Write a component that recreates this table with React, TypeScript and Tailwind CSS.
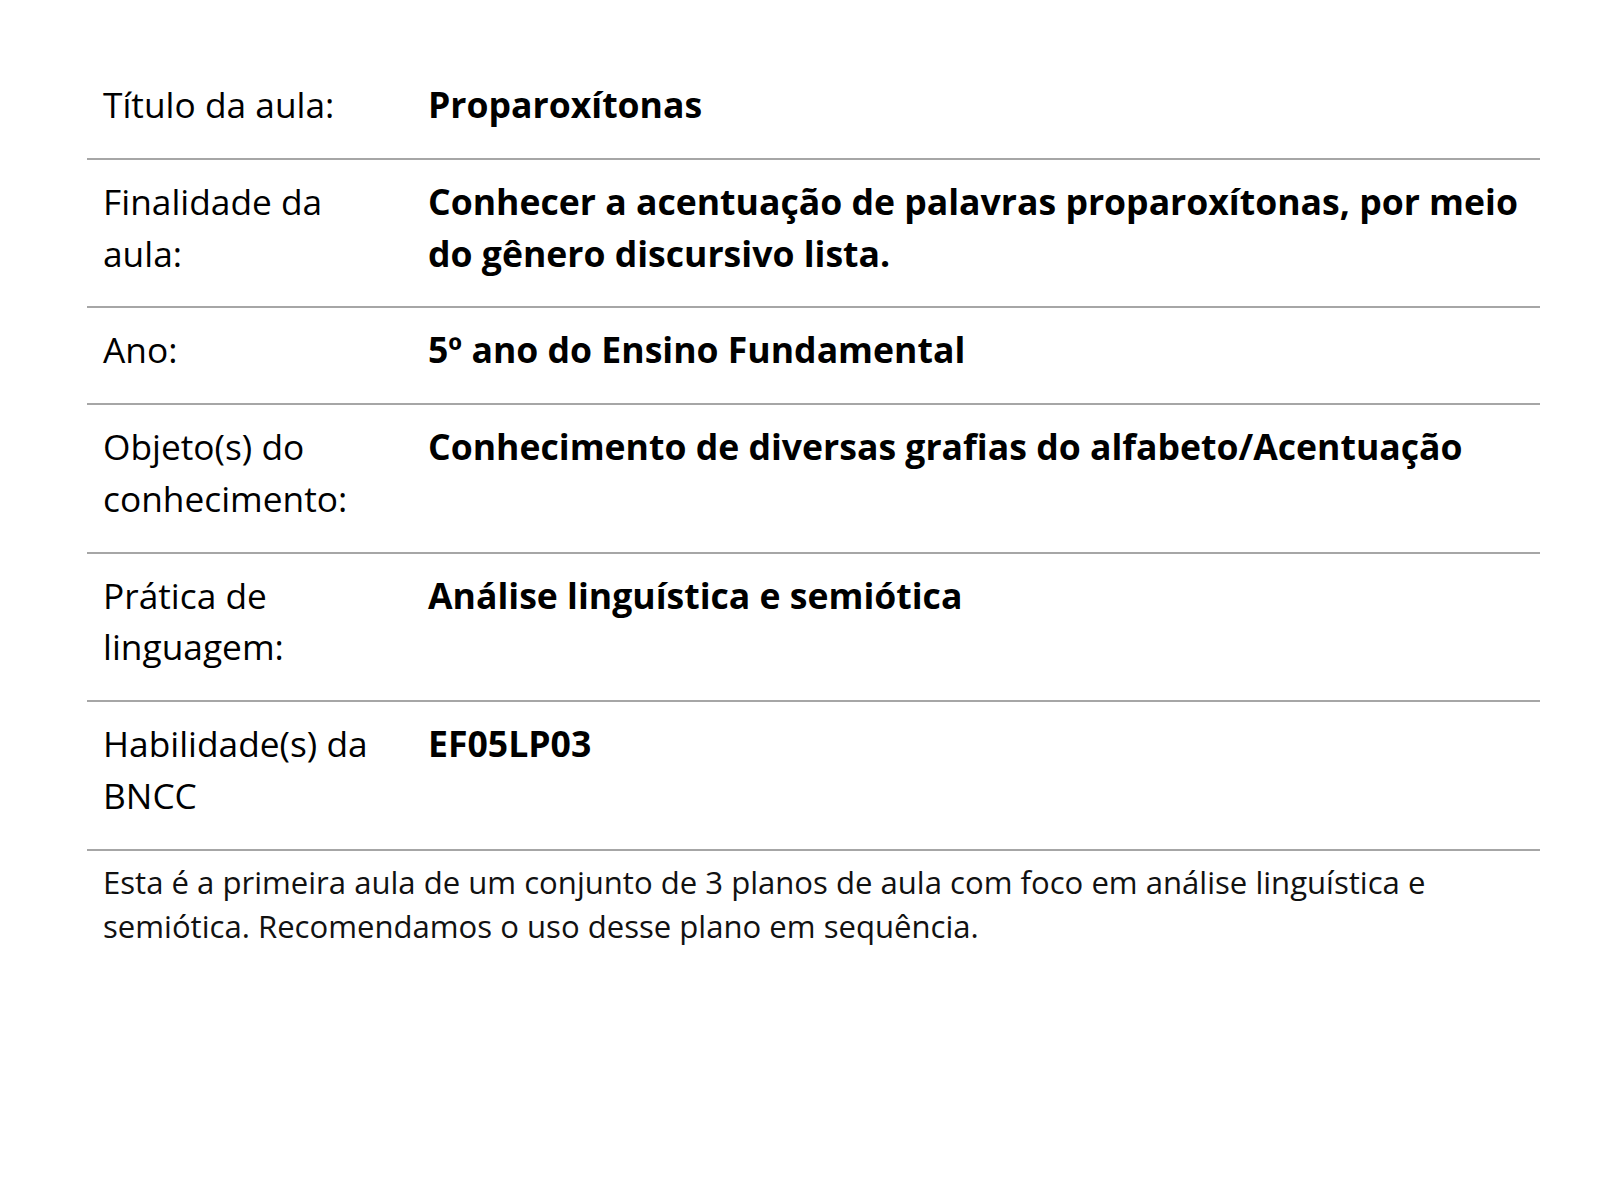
// Lesson plan summary table
type Row = {
  label: string;
  value: string;
};

const rows: Row[] = [
  { label: "Título da aula:", value: "Proparoxítonas" },
  {
    label: "Finalidade da aula:",
    value: "Conhecer a acentuação de palavras proparoxítonas, por meio do gênero discursivo lista.",
  },
  { label: "Ano:", value: "5º ano do Ensino Fundamental" },
  {
    label: "Objeto(s) do conhecimento:",
    value: "Conhecimento de diversas grafias do alfabeto/Acentuação",
  },
  { label: "Prática de linguagem:", value: "Análise linguística e semiótica" },
  { label: "Habilidade(s) da BNCC", value: "EF05LP03" },
];

export default function App() {
  return (
    <div
      className="min-h-[1200px] bg-white text-black pt-[63px]"
      style={{ fontFamily: '"Open Sans", "Noto Sans", sans-serif' }}
    >
      <div className="ml-[87px] w-[1453px]">
        {rows.map((row) => (
          <div
            key={row.label}
            className="flex px-4 pt-4 pb-[27px] border-b-2 border-[#a6a6a6] text-[35.3px] leading-[51.75px]"
          >
            <div className="w-[325px] shrink-0 pr-[45px]">{row.label}</div>
            <div className="flex-1 font-bold text-[35.6px]">{row.value}</div>
          </div>
        ))}

        {/* Footer note */}
        <p className="px-4 pt-[9px] text-[31.1px] leading-[44.5px] text-[#111]">
          Esta é a primeira aula de um conjunto de 3 planos de aula com foco em análise linguística e
          semiótica. Recomendamos o uso desse plano em sequência.
        </p>
      </div>
    </div>
  );
}
